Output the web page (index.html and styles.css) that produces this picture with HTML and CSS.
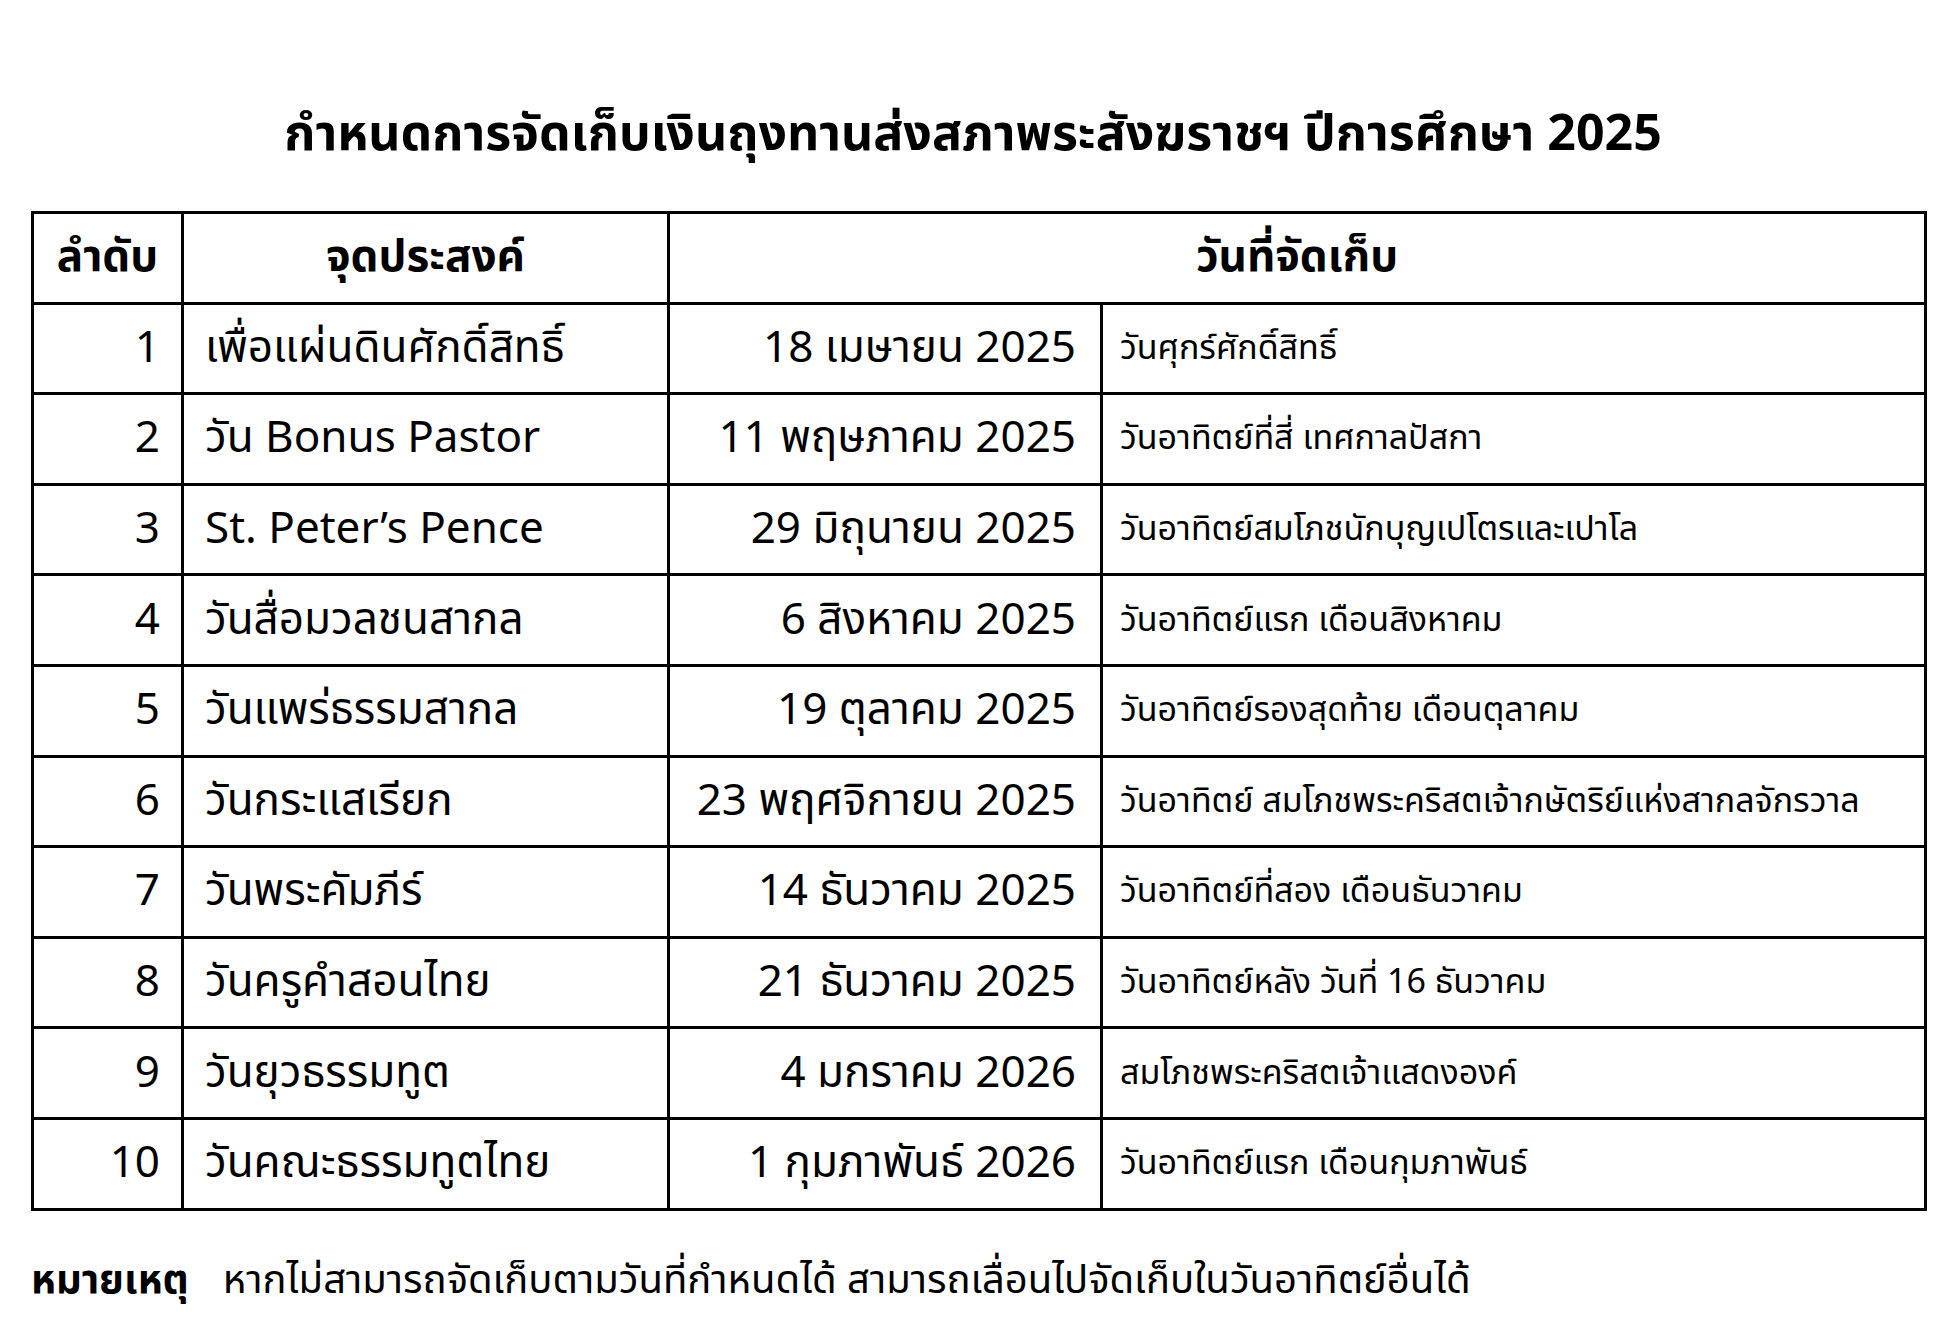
FILE: index.html
```html
<!DOCTYPE html>
<html lang="th">
<head>
<meta charset="utf-8">
<title>กำหนดการจัดเก็บเงินถุงทาน</title>
<link rel="stylesheet" href="styles.css">
</head>
<body>
<main class="page">
  <h1 class="title">กำหนดการจัดเก็บเงินถุงทานส่งสภาพระสังฆราชฯ ปีการศึกษา 2025</h1>
  <table class="schedule">
    <colgroup>
      <col class="c-no">
      <col class="c-purpose">
      <col class="c-date">
      <col class="c-day">
    </colgroup>
    <thead>
      <tr>
        <th>ลำดับ</th>
        <th>จุดประสงค์</th>
        <th colspan="2">วันที่จัดเก็บ</th>
      </tr>
    </thead>
    <tbody>
      <tr><td class="no">1</td><td class="purpose">เพื่อแผ่นดินศักดิ์สิทธิ์</td><td class="date">18 เมษายน 2025</td><td class="day">วันศุกร์ศักดิ์สิทธิ์</td></tr>
      <tr><td class="no">2</td><td class="purpose">วัน Bonus Pastor</td><td class="date">11 พฤษภาคม 2025</td><td class="day">วันอาทิตย์ที่สี่ เทศกาลปัสกา</td></tr>
      <tr><td class="no">3</td><td class="purpose">St. Peter’s Pence</td><td class="date">29 มิถุนายน 2025</td><td class="day">วันอาทิตย์สมโภชนักบุญเปโตรและเปาโล</td></tr>
      <tr><td class="no">4</td><td class="purpose">วันสื่อมวลชนสากล</td><td class="date">6 สิงหาคม 2025</td><td class="day">วันอาทิตย์แรก เดือนสิงหาคม</td></tr>
      <tr><td class="no">5</td><td class="purpose">วันแพร่ธรรมสากล</td><td class="date">19 ตุลาคม 2025</td><td class="day">วันอาทิตย์รองสุดท้าย เดือนตุลาคม</td></tr>
      <tr><td class="no">6</td><td class="purpose">วันกระแสเรียก</td><td class="date">23 พฤศจิกายน 2025</td><td class="day">วันอาทิตย์ สมโภชพระคริสตเจ้ากษัตริย์แห่งสากลจักรวาล</td></tr>
      <tr><td class="no">7</td><td class="purpose">วันพระคัมภีร์</td><td class="date">14 ธันวาคม 2025</td><td class="day">วันอาทิตย์ที่สอง เดือนธันวาคม</td></tr>
      <tr><td class="no">8</td><td class="purpose">วันครูคำสอนไทย</td><td class="date">21 ธันวาคม 2025</td><td class="day">วันอาทิตย์หลัง วันที่ 16 ธันวาคม</td></tr>
      <tr><td class="no">9</td><td class="purpose">วันยุวธรรมทูต</td><td class="date">4 มกราคม 2026</td><td class="day">สมโภชพระคริสตเจ้าแสดงองค์</td></tr>
      <tr><td class="no">10</td><td class="purpose">วันคณะธรรมทูตไทย</td><td class="date">1 กุมภาพันธ์ 2026</td><td class="day">วันอาทิตย์แรก เดือนกุมภาพันธ์</td></tr>
    </tbody>
  </table>
  <p class="note"><span class="note-label">หมายเหตุ</span><span class="note-text">หากไม่สามารถจัดเก็บตามวันที่กำหนดได้ สามารถเลื่อนไปจัดเก็บในวันอาทิตย์อื่นได้</span></p>
</main>
</body>
</html>
```

FILE: styles.css
```css
html, body {
  margin: 0;
  padding: 0;
  background: #ffffff;
}

body {
  font-family: "Noto Sans Thai", "Tahoma", "Noto Sans", "DejaVu Sans", sans-serif;
  color: #000000;
}

.page {
  width: 1954px;
  height: 1331px;
  box-sizing: border-box;
  padding: 0 27px 0 31px;
  overflow: hidden;
}

.title {
  margin: 0;
  height: 211px;
  box-sizing: border-box;
  padding: 100px 12px 0 0;
  text-align: center;
  font-size: 50px;
  font-weight: 700;
  line-height: 70px;
}

.schedule {
  width: 1893px;
  border-collapse: collapse;
  table-layout: fixed;
  border: 3px solid #000;
}

.c-no { width: 150px; }
.c-purpose { width: 486px; }
.c-date { width: 433px; }
.c-day { width: 824px; }

.schedule th,
.schedule td {
  border: 3px solid #000;
  height: 90.6px;
  padding: 0;
  box-sizing: border-box;
  white-space: nowrap;
}

.schedule th {
  font-size: 44px;
  font-weight: 700;
  text-align: center;
}

.schedule td {
  font-size: 44px;
  font-weight: 400;
}

.schedule td.no {
  text-align: right;
  padding-right: 21px;
}

.schedule td.date {
  text-align: right;
  padding-right: 24px;
}

.schedule td.purpose {
  padding-left: 21px;
}

.schedule td.day {
  padding-left: 17px;
  font-size: 34px;
}

.note {
  margin: 0;
  padding-top: 40px;
  display: flex;
  align-items: baseline;
  gap: 34px;
  font-size: 40px;
}

.note-label {
  font-weight: 700;
}
```
